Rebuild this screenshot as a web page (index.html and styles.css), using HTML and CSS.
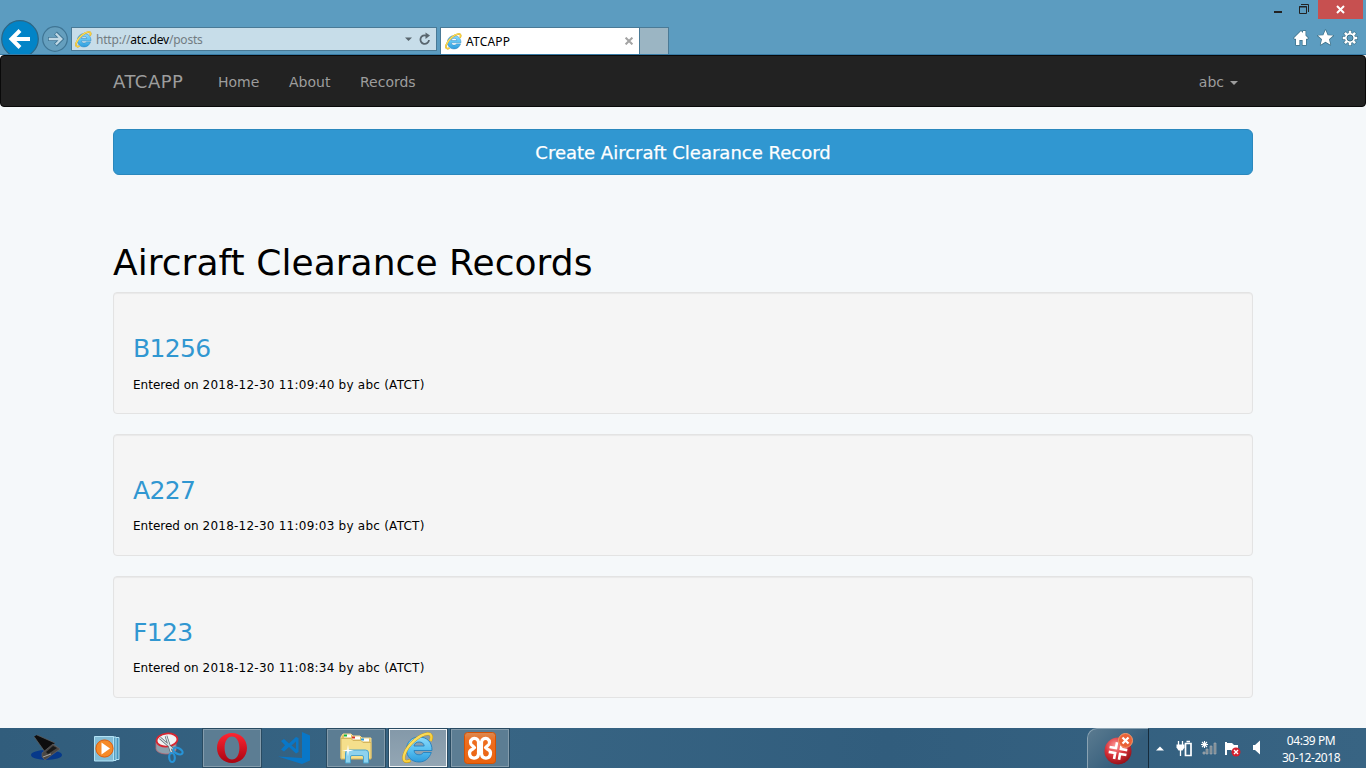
FILE: index.html
```html
<!DOCTYPE html>
<html lang="en">
<head>
<meta charset="utf-8">
<title>ATCAPP</title>
<link rel="stylesheet" href="styles.css">
</head>
<body>
<svg class="defs" width="0" height="0">
  <defs>
    <linearGradient id="blue" x1="0" y1="0" x2="0" y2="1"><stop offset="0" stop-color="#8bd9fa"/><stop offset=".5" stop-color="#59c1f2"/><stop offset="1" stop-color="#2e9bdc"/></linearGradient>
    <linearGradient id="gold" x1="0" y1="0" x2="1" y2="1"><stop offset="0" stop-color="#fff08a"/><stop offset="1" stop-color="#f2b705"/></linearGradient>
    <linearGradient id="red" x1="0" y1="0" x2="0" y2="1"><stop offset="0" stop-color="#ff2532"/><stop offset="1" stop-color="#a80512"/></linearGradient>
    <linearGradient id="orange" x1="0" y1="0" x2="0" y2="1"><stop offset="0" stop-color="#d98b55"/><stop offset=".25" stop-color="#ef6e20"/><stop offset="1" stop-color="#e9620e"/></linearGradient>
    <radialGradient id="ball" cx=".4" cy=".3" r=".75"><stop offset="0" stop-color="#ff9a9a"/><stop offset=".5" stop-color="#d9323a"/><stop offset="1" stop-color="#8d0d16"/></radialGradient>
    <symbol id="ie" viewBox="0 0 32 32">
      <path d="M30 18.500H12c.3 2.800 2.200 4.300 5 4.300 2 0 3.500-.8 4.300-2.300h8C27.300 26.300 23 30 17 30 9.700 30 4.500 24.800 4.500 17.500S9.700 5 17 5C25 5 30.300 10.200 30 18.500zM12 14h10.200c-.4-2.600-2.200-4-5-4-2.900 0-4.700 1.400-5.200 4z" fill="url(#blue)" stroke="#2580bd" stroke-width=".9"/>
      <path d="M28.500 9C30.500 4 29 1.500 25.500 1.800 18 2.500 6 12 2.500 22c-2 6 0 9 5.800 6.500" fill="none" stroke="#c18f00" stroke-width="3"/>
      <path d="M28.500 9C30.500 4 29 1.500 25.500 1.800 18 2.500 6 12 2.500 22c-2 6 0 9 5.800 6.500" fill="none" stroke="url(#gold)" stroke-width="2.400"/>
    </symbol>
  </defs>
</svg>
<div class="screen">
  <header class="browser">
    <div class="bar">
      <div class="back"><svg width="38" height="35" viewBox="0 0 38 35"><circle cx="19" cy="19" r="18.300" fill="#0284c7" stroke="#2e6684" stroke-width="1.200"/><path d="M29 19H12M19 10.500L10.500 19l8.500 8.500" fill="none" stroke="#fff" stroke-width="4"/></svg></div>
      <div class="forward"><svg width="26" height="26" viewBox="0 0 26 26"><circle cx="13" cy="13" r="12.300" fill="#659fbe" stroke="#3f7594" stroke-width="1.200"/><path d="M6 13h12M13.500 7l6 6-6 6" fill="none" stroke="#3f7594" stroke-width="4"/><path d="M6.800 13H18M13.800 7.500l5.500 5.500-5.500 5.500" fill="none" stroke="#bfd8e5" stroke-width="2.300"/></svg></div>
      <div class="address">
        <svg class="ie-small"><use href="#ie"/></svg>
        <span class="url">http://<b>atc.dev</b>/posts</span>
        <svg width="32" height="16" viewBox="0 0 32 16"><path d="M1 6.500h7L4.500 10z" fill="#59666e"/><path d="M22.500 4.700A4.300 4.300 0 1 0 25 9" fill="none" stroke="#59666e" stroke-width="1.800"/><path d="M21.500 1.500l4.500 3-4.500 3.500z" fill="#59666e"/></svg>
      </div>
      <div class="tab"><svg class="ie-small"><use href="#ie"/></svg><span>ATCAPP</span><svg width="8" height="8" viewBox="0 0 8 8"><path d="M.6.600l6.800 6.800M7.400.600L.6 7.400" stroke="#a3a3a3" stroke-width="2"/></svg></div>
      <div class="newtab"></div>
    </div>
    <div class="controls">
      <div class="window-buttons">
        <svg width="44" height="19" viewBox="0 0 44 19"><path d="M0 12h8" stroke="#222" stroke-width="2"/><path d="M25.500 6.500h7v7h-7zM25 7h8" fill="none" stroke="#222"/><path d="M27 4.500h7.500V12" fill="none" stroke="#222"/></svg>
        <div class="close"><svg width="9" height="9" viewBox="0 0 9 9"><path d="M1 1l7 7M8 1L1 8" stroke="#fff" stroke-width="2"/></svg></div>
      </div>
      <svg class="tools" width="66" height="18" viewBox="0 0 66 18"><g fill="#fff" stroke="#3f7188" stroke-width="1.400" paint-order="stroke" stroke-linejoin="round"><path d="M1 9l7-7 2 2V2h2.500v4.500L15 9l-1 1.200-1-.8V16H9.600v-5H6.400v5H3V9.400l-1 .8z"/><path d="M32.500 1l2.200 5.200 5.500.4-4.200 3.600 1.400 5.600-4.900-3-4.900 3L29 10.200l-4.200-3.600 5.500-.4z"/></g><g transform="translate(57 9)"><g stroke="#3f7188" stroke-width="3.800"><path d="M0-7.700v15.400M-7.700 0h15.400M-5.500-5.500l11 11M-5.500 5.500l11-11"/></g><g stroke="#fff" stroke-width="2.500"><path d="M0-7.200v14.400M-7.200 0h14.400M-5.100-5.100l10.200 10.200M-5.100 5.100l10.200-10.200"/></g><circle r="5" fill="#fff"/><circle r="3" fill="#5c9cbf" stroke="#3f7188"/></g></svg>
    </div>
  </header>
  <nav class="navbar">
    <div class="container nav-row">
      <a class="brand">ATCAPP</a><a class="link home">Home</a><a class="link about">About</a><a class="link">Records</a>
      <a class="link user">abc <i class="caret"></i></a>
    </div>
  </nav>
  <main class="container content">
    <a class="create"><span>Create Aircraft Clearance Record</span></a>
    <h1>Aircraft Clearance Records</h1>
    <section class="well"><h3>B1256</h3><small>Entered on <span>2018-12-30 11:09:40 by abc (ATCT)</span></small></section>
    <section class="well"><h3>A227</h3><small>Entered on <span>2018-12-30 11:09:03 by abc (ATCT)</span></small></section>
    <section class="well"><h3>F123</h3><small>Entered on <span>2018-12-30 11:08:34 by abc (ATCT)</span></small></section>
  </main>
  <footer class="taskbar">
    <div class="task"><svg width="36" height="32" viewBox="0 0 36 32"><ellipse cx="18.500" cy="23" rx="15.500" ry="5" fill="#07398a"/><path d="M6 4.500l3-1.500 18 8-10 9z" fill="#0d0d0e"/><path d="M6 4.500l11 15.500 2-1.500M9 3l18 8" fill="none" stroke="#5d5d5d" stroke-width=".8"/><path d="M14 21l11-9 7 5-15 11-3-3z" fill="#4a4745" stroke="#696766" stroke-width=".6"/><path d="M18 20l7-6 4 2-9 6z" fill="#191919"/><path d="M15 25l8-3" stroke="#aaa69f"/></svg></div>
    <div class="task"><svg width="30" height="30" viewBox="0 0 30 30"><path d="M6 4.500h20v22H6z" fill="#4695bc" stroke="#b2e2f5"/><path d="M4 4h19v23.500H4z" fill="#579fc2" stroke="#b2e2f5"/><path d="M1.500 3.500h19V28h-19z" fill="#83bdd6" stroke="#b2e2f5"/><circle cx="11.500" cy="15.500" r="8.600" fill="#f68a28" stroke="#e15c08"/><path d="M8.500 9.500l8.500 6-8.500 6z" fill="#fff"/></svg></div>
    <div class="task"><svg width="32" height="34" viewBox="0 0 32 34"><path d="M2 11v7c1 6 18 7 20 1v-8" fill="#a3afb8" fill-opacity=".8" stroke="#bd6570" stroke-width=".8"/><ellipse cx="13" cy="9" rx="10.500" ry="6.500" fill="#f1f2f3" stroke="#d92631" stroke-width="1.800" transform="rotate(-6 13 9)"/><path d="M6 7l14 12M12 5l6 18" stroke="#58636b" stroke-width="2.600"/><path d="M6 7l14 12M12 5l6 18" stroke="#dbe2e4" stroke-width="1.300"/><ellipse cx="24" cy="20" rx="5" ry="2.800" transform="rotate(28 24 20)" fill="none" stroke="#2794d8" stroke-width="2.200"/><ellipse cx="18" cy="26.500" rx="2.800" ry="4.500" transform="rotate(-5 18 26.500)" fill="none" stroke="#2794d8" stroke-width="2.200"/></svg></div>
    <div class="task open"><svg width="32" height="32" viewBox="0 0 32 32"><path fill="url(#red)" fill-rule="evenodd" d="M16 1c8.500 0 15 6.500 15 15s-6.500 15-15 15S1 24.500 1 16 7.500 1 16 1zm0 3.500C11.700 4.500 8.600 9 8.600 16s3.100 11.500 7.400 11.500S23.400 23 23.400 16 20.300 4.500 16 4.500z"/></svg></div>
    <div class="task"><svg width="34" height="34" viewBox="0 0 34 34"><path fill="#0877c8" fill-rule="evenodd" d="M25 1l8 3.500v25L25 33 1 25.500l24 1.500zM4 10l3-2 5 4.500L19 6l2.500 1v14L19 22.500l-7-6.500-5 4.500-3-2 4-4.300zM19 10.500l-4.500 4L19 18z"/></svg></div>
    <div class="task open"><svg width="36" height="32" viewBox="0 0 36 32"><path d="M3 8V5l2-3h8l2 2h7l2 2h9v20H3z" fill="#e0bf62" stroke="#f6df92"/><path d="M6 2.500h7v3H6zM14 4.500h8v3h-8zM23 6.500h8v3h-8z" fill="#fff"/><path d="M6 2.500h3v2H6z" fill="#12b43a"/><path d="M14 4.500h3v2h-3z" fill="#d63322"/><path d="M23 6.500h3v2h-3z" fill="#2c9bd7"/><path d="M3 6.500h10l2 2h8l2 2h8V27H3z" fill="#f5df8c" stroke="#d5b55c"/><path d="M7.500 31V21q0-3 3-3h17q3 0 3 3v10h-5v-6q0-1.500-1.500-1.500h-10q-1.500 0-1.500 1.500v6z" fill="#8dd2ee" stroke="#4ba4cc"/><path d="M10 12.500l.8 5.200L16 18.500l-5.200.8L10 24.500l-.8-5.200-5.200-.8 5.200-.8z" fill="#fff"/></svg></div>
    <div class="task open active"><svg width="32" height="32"><use href="#ie"/></svg></div>
    <div class="task open"><svg width="32" height="32" viewBox="0 0 32 32"><rect x=".5" y=".5" width="31" height="31" rx="3" fill="url(#orange)" stroke="#d45204"/><path d="M14.500 13.500V10a4 4 0 1 0-6 3.800l2 1.800-2 1.700A4.500 4.500 0 1 0 14.500 22v-3.500h3V22a4.500 4.500 0 1 0 6-4.700l-2-1.700 2-1.800a4 4 0 1 0-6-3.800v3.500z" fill="none" stroke="#fff" stroke-width="3.200" stroke-linejoin="round"/><path d="M13 12h6v8h-6z" fill="#fff"/></svg></div>
    <div class="tray-app"><svg width="32" height="34" viewBox="0 0 32 34"><circle cx="15" cy="19" r="13.500" fill="url(#ball)"/><g transform="rotate(10 15 19)"><path d="M6 16.500h6.500v-6M17.500 10.500v6H24M6 21.500h6.500v6M17.500 27.500v-6H24" fill="none" stroke="#fff" stroke-width="2.600"/></g><circle cx="22.500" cy="8.500" r="7" fill="#eb6237" stroke="#f49a6d"/><path d="M19.500 5.500l6 6M25.500 5.500l-6 6" stroke="#fff" stroke-width="2.200"/></svg></div>
    <svg class="tray" width="110" height="20" viewBox="0 0 110 20"><path d="M0 12.500L4 8.500l4 4z" fill="#fff"/><path d="M22.500 3v4M26.500 3v4M24.500 12v6" fill="none" stroke="#fff" stroke-width="1.300"/><path d="M20.500 6.500h8v3l-2 3h-4l-2-3z" fill="#fff"/><path d="M29.500 5.500h5.500v12h-5.500zM30.500 3.500h3.500" fill="none" stroke="#fff" stroke-width="1.700"/><g fill="#78858c" stroke="#aeb7bc" stroke-width=".6"><path d="M47 14h2v2h-2zM50 11h2v5h-2zM54 8h2v8h-2zM58 5h2v11h-2z"/></g><path d="M48.500 3v7M45 6.500h7M46 4l5 5M51 4l-5 5" stroke="#fff" stroke-width="1.100"/><path d="M70 4v13" stroke="#fff" stroke-width="2"/><path d="M71 5h5l2 2h4v7h-5l-2-2h-4z" fill="#fff"/><circle cx="80" cy="14" r="4.500" fill="#d51f2d"/><path d="M78 12l4 4M82 12l-4 4" stroke="#fff" stroke-width="1.400"/><path d="M97 7h2l5-4.500v14L99 12h-2z" fill="#fff"/></svg>
    <div class="clock"><span>04:39 PM</span><span>30-12-2018</span></div>
  </footer>
</div>
</body>
</html>
```
FILE: styles.css
```css
* { box-sizing: border-box; }
body { margin: 0; font-family: "DejaVu Sans", sans-serif; color: #000; }
svg { display: block; flex: none; }
.defs { position: absolute; }
.screen { width: 1366px; height: 768px; display: flex; flex-direction: column; background: #f5f8fa; overflow: hidden; }
.browser { height: 55px; flex: none; background: #5c9cc0; border-bottom: 1px solid #387ba5; display: flex; justify-content: space-between; font-family: "Noto Sans", sans-serif; }
.bar { display: flex; align-items: flex-start; padding-left: 1px; }
.back { padding-top: 20px; height: 54px; overflow: hidden; }
.forward { padding: 26px 0 0 3px; }
.address { width: 366px; height: 24px; margin: 27px 0 0 3px; background: #c7dde9; border: 1px solid #4a7a96; display: flex; align-items: center; padding-left: 3px; }
.ie-small { width: 17px; height: 17px; }
.url { font-size: 12px; color: #727c82; margin: 1px 0 0 4px; flex: 1; white-space: nowrap; letter-spacing: -.2px; }
.url b { font-weight: 400; color: #000; }
.tab { width: 200px; height: 27px; margin: 27px 0 0 3px; background: #fff; border: 1px solid #4a7a96; border-bottom: 0; display: flex; align-items: center; padding: 0 6px 0 4px; font-size: 12px; }
.tab span { flex: 1; margin: 1px 0 0 4px; letter-spacing: .2px; }
.newtab { width: 29px; height: 27px; margin-top: 27px; background: #9bb5c3; border: 1px solid #4a7a96; border-width: 1px 1px 0 0; }
.controls { display: flex; flex-direction: column; align-items: flex-end; }
.window-buttons { display: flex; padding-right: 3px; }
.close { width: 45px; height: 19px; background: #c75050; display: flex; align-items: center; justify-content: center; }
.tools { margin: 10px 7px 0 0; }
.navbar { height: 52px; flex: none; background: #222; border: 1px solid #090909; border-radius: 4px; }
.container { width: 1140px; margin: 0 auto; }
.nav-row { height: 50px; display: flex; align-items: center; color: #9d9d9d; padding-top: 2px; }
.brand { font-size: 18px; width: 105px; letter-spacing: .5px; padding-bottom: 1px; }
.link { font-size: 14px; white-space: nowrap; }
.home { width: 71px; }
.about { width: 71px; }
.user { margin-left: auto; padding-right: 15px; display: flex; align-items: center; }
.caret { border: 4px solid transparent; border-top-color: #9d9d9d; border-bottom: 0; margin: 2px 0 0 6px; }
.content { flex: 1; padding-top: 22px; }
.create { height: 46px; background: #3097d1; border: 1px solid #2a88bd; border-radius: 6px; color: #fff; font-size: 18px; display: flex; align-items: center; justify-content: center; -webkit-text-stroke: .25px #fff; }
h1 { font-size: 36px; line-height: 40px; font-weight: 400; margin: 68px 0 9px; white-space: nowrap; letter-spacing: .04px; }
.well { height: 122px; margin-bottom: 20px; padding: 39px 19px 0; border: 1px solid #e3e3e3; border-radius: 4px; background: #f5f5f5; box-shadow: inset 0 1px 1px rgba(0,0,0,.05); }
h3 { font-size: 25px; line-height: 34px; font-weight: 400; color: #3097d1; margin: 0 0 10px; letter-spacing: -.65px; }
small { display: block; font-size: 12px; line-height: 16px; }
small span { letter-spacing: .24px; }
.well:first-of-type small { padding-top: 1px; }
.taskbar { height: 40px; flex: none; display: flex; align-items: center; background: linear-gradient(90deg, #315d7c, #386584 35%, #315d7d 65%, #386483); padding-left: 17px; color: #fff; }
.task { width: 58px; height: 40px; margin-right: 4px; display: flex; align-items: center; justify-content: center; }
.open { background: #5c7d93; border: 1px solid #849cac; outline: 1px solid #294b62; height: 38px; }
.active { background: linear-gradient(#8499a9, #93a6b4); border-color: #f1f4f6; }
.tray-app { width: 62px; height: 40px; margin-left: 574px; border: 1px solid #8aa3b3; border-right-color: #152b3c; border-bottom: 0; border-radius: 10px 0 0 0; background: linear-gradient(135deg, #5b7b90, #355e7c 65%); display: flex; align-items: center; justify-content: center; padding-left: 2px; }
.tray { margin-left: 7px; }
.clock { flex: 1; display: flex; flex-direction: column; align-items: center; font: 12px/17px "Noto Sans", sans-serif; padding: 1px 10px 0 0; letter-spacing: -.45px; }
```
